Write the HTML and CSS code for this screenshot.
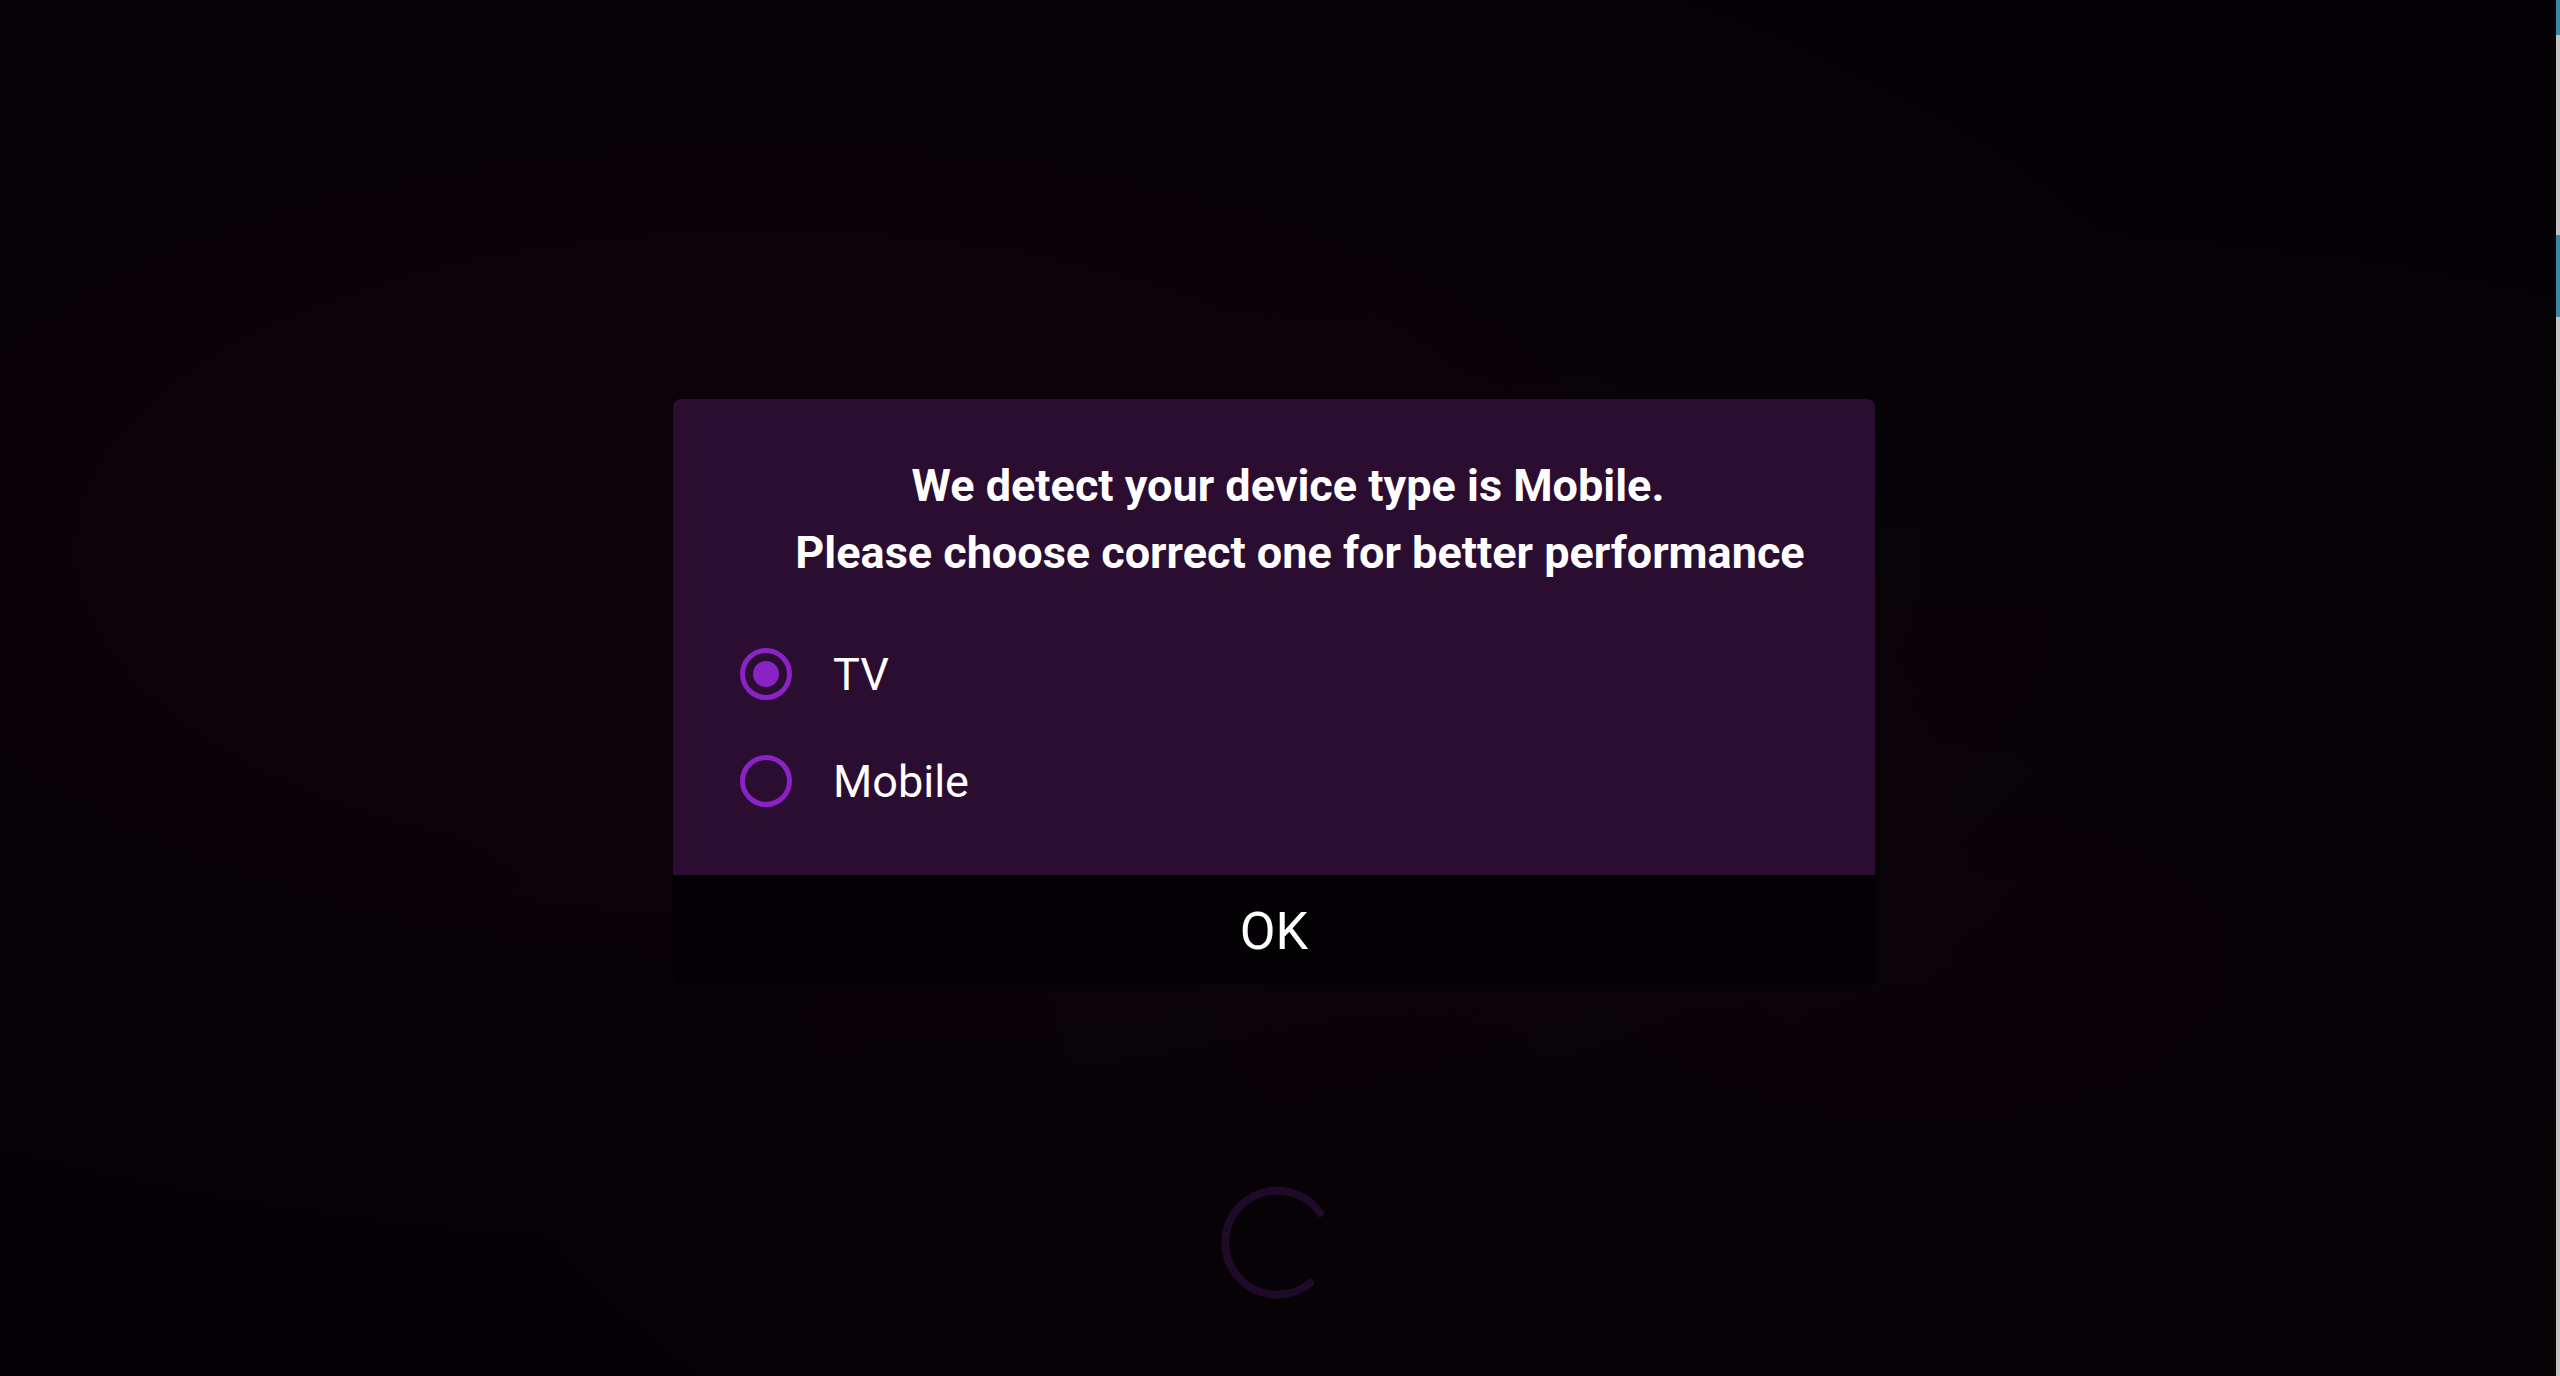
FILE: index.html
```html
<!DOCTYPE html>
<html>
  <head>
    <meta charset="UTF-8" />
    <title>Device Type</title>
    <link rel="stylesheet" href="styles.css">
  </head>
  <body>
    <div class="screen">
      <!-- Splash area with the loading spinner behind the dialog -->
      <div class="splash">
        <svg class="spinner" width="120" height="120" viewBox="0 0 120 120">
          <path d="M 100 32 A 52 52 0 1 0 90 102" fill="none" stroke="#1f0a29" stroke-width="8" stroke-linecap="round" />
        </svg>
      </div>
      <div class="edge">
        <div class="edge-blue top"></div>
        <div class="edge-gray"></div>
        <div class="edge-blue mid"></div>
      </div>
    </div>

    <!-- Device type dialog -->
    <div class="overlay">
      <div class="dialog">
        <div class="dialog-body">
          <div class="dialog-title">
            <div class="title-line first">We detect your device type is Mobile.</div>
            <div class="title-line">Please choose correct one for better performance</div>
          </div>

          <div class="options">
            <label class="option">
              <input type="radio" name="device" value="tv" checked />
              <span class="radio"></span>
              <span class="option-text">TV</span>
            </label>
            <label class="option">
              <input type="radio" name="device" value="mobile" />
              <span class="radio"></span>
              <span class="option-text">Mobile</span>
            </label>
          </div>
        </div>
        <button class="ok-button" type="button">OK</button>
      </div>
    </div>
  </body>
</html>
```

FILE: styles.css
```css
body {
  margin: 0;
  height: 100vh;
  background: #050205;
  font-family: Roboto, "Noto Sans", Arial, sans-serif;
  color: #fff;
  overflow: hidden;
}

.screen {
  display: flex;
  height: 100%;
}
.splash {
  flex: 1;
  display: flex;
  flex-direction: column;
  justify-content: flex-end;
  align-items: center;
  padding-bottom: 75px;
  padding-left: 4px;
  background:
    radial-gradient(ellipse at 30% 40%, rgba(40, 8, 30, 0.2), transparent 60%),
    radial-gradient(ellipse at 75% 70%, rgba(30, 6, 28, 0.15), transparent 55%),
    #050205;
}
.spinner {
  display: block;
}

/* thin strip on the right edge */
.edge {
  width: 4px;
  display: flex;
  flex-direction: column;
  background: #c4c4c4;
}
.edge-blue {
  background: #3d86a8;
}
.edge-blue.top {
  height: 35px;
}
.edge-gray {
  height: 200px;
}
.edge-blue.mid {
  height: 82px;
}

/* Dialog */
.overlay {
  position: fixed;
  inset: 0;
  display: flex;
  align-items: center;
  justify-content: center;
  padding-top: 7px;
  padding-right: 12px;
}
.dialog {
  width: 1202px;
  display: flex;
  flex-direction: column;
  border-radius: 8px;
  overflow: hidden;
  background: #030103;
}
.dialog-body {
  background: #2c0d32;
  padding: 53px 0 40px;
}
.dialog-title {
  font-size: 45px;
  font-weight: bold;
  line-height: 67px;
  text-align: center;
}
.title-line {
  padding-left: 52px;
}
.title-line.first {
  padding-left: 28px;
}

.options {
  margin-top: 35px;
  display: flex;
  flex-direction: column;
}
.option {
  height: 107px;
  display: flex;
  align-items: center;
  padding-left: 67px;
  cursor: pointer;
}
.option input {
  display: none;
}
.radio {
  width: 52px;
  height: 52px;
  box-sizing: border-box;
  border: 5px solid #8a22c6;
  border-radius: 50%;
  display: flex;
  align-items: center;
  justify-content: center;
}
.option input:checked + .radio::after {
  content: "";
  width: 26px;
  height: 26px;
  border-radius: 50%;
  background: #8a22c6;
}
.option-text {
  margin-left: 41px;
  font-size: 45px;
}

.ok-button {
  height: 110px;
  border: none;
  background: #030103;
  color: #fff;
  font-family: Roboto, "Noto Sans", Arial, sans-serif;
  font-size: 52px;
  cursor: pointer;
  padding: 4px 0 0;
}
```
